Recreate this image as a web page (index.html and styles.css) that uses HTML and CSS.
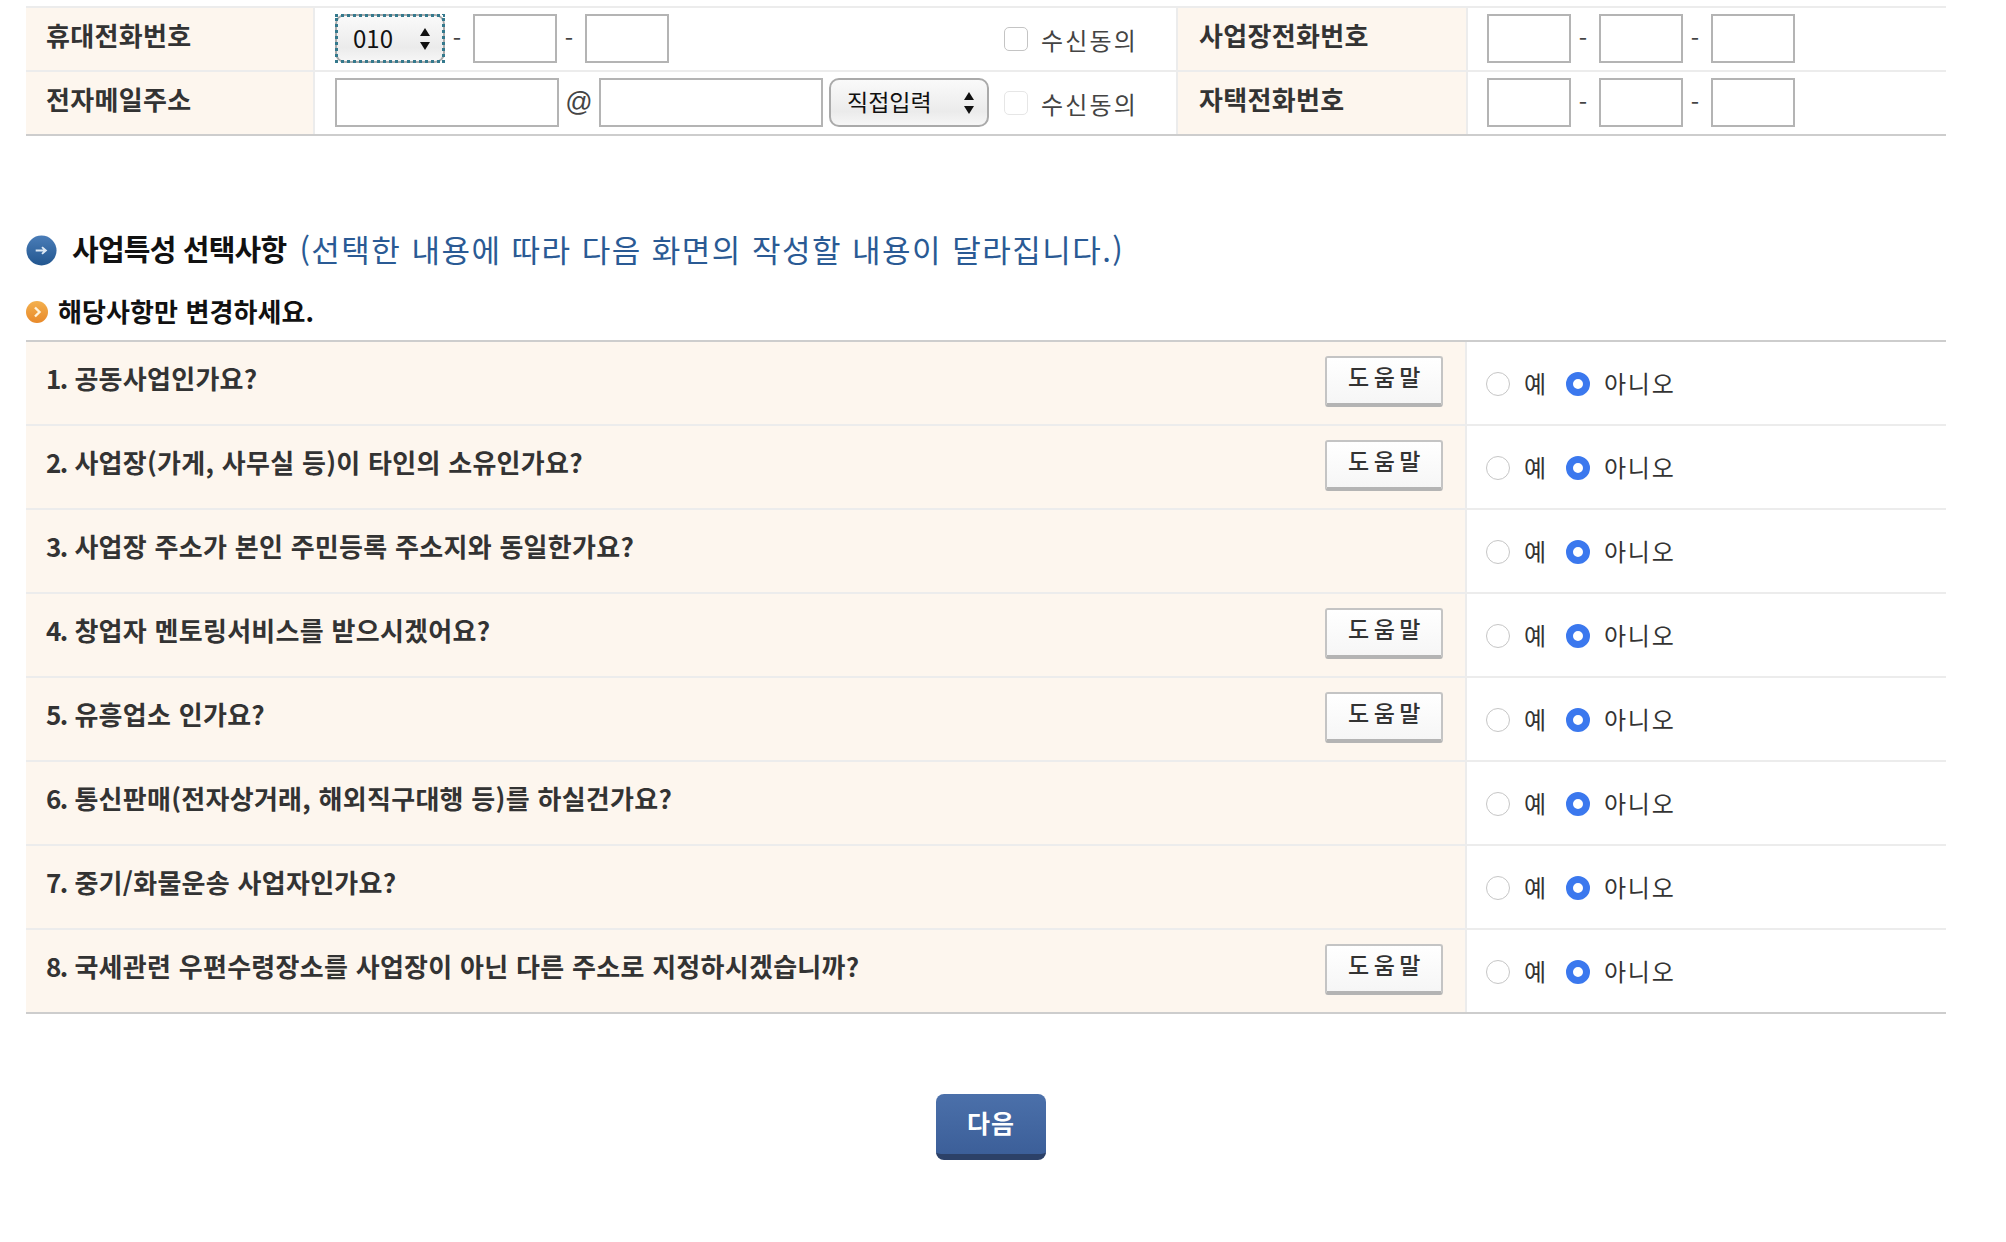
FILE: index.html
```html
<!DOCTYPE html>
<html lang="ko">
<head>
<meta charset="utf-8">
<title>사업특성 선택사항</title>
<link rel="stylesheet" href="styles.css">
</head>
<body>
<main class="page">
  <section class="contact">
    <div class="contact-row">
      <div class="label">휴대전화번호</div>
      <div class="cell">
        <div class="focus-wrap"><select class="sel sel-tel"><option>010</option></select></div>
        <span class="dash">-</span><input class="box" type="text"><span class="dash">-</span><input class="box" type="text">
        <label class="agree"><input class="check" type="checkbox"><span>수신동의</span></label>
      </div>
      <div class="label label-side">사업장전화번호</div>
      <div class="cell cell-side">
        <input class="box" type="text"><span class="dash">-</span><input class="box" type="text"><span class="dash">-</span><input class="box" type="text">
      </div>
    </div>
    <div class="contact-row">
      <div class="label">전자메일주소</div>
      <div class="cell">
        <input class="box box-mail" type="text"><span class="at">@</span><input class="box box-mail" type="text">
        <select class="sel sel-mail"><option>직접입력</option></select>
        <label class="agree"><input class="check check-off" type="checkbox" disabled><span>수신동의</span></label>
      </div>
      <div class="label label-side">자택전화번호</div>
      <div class="cell cell-side">
        <input class="box" type="text"><span class="dash">-</span><input class="box" type="text"><span class="dash">-</span><input class="box" type="text">
      </div>
    </div>
  </section>

  <h2 class="section-title">
    <svg class="icon-blue" viewBox="0 0 32 32" aria-hidden="true"><defs><linearGradient id="bl" x1="0" y1="0" x2="0" y2="1"><stop offset="0" stop-color="#4a7db8"/><stop offset="1" stop-color="#22568f"/></linearGradient></defs><circle cx="16" cy="16" r="15.5" fill="url(#bl)"/><path d="M10 16h10M16.5 12.5l4 3.5-4 3.5" fill="none" stroke="#dce8f4" stroke-width="2"/></svg>
    <strong>사업특성 선택사항</strong>
    <span class="subtitle">(선택한 내용에 따라 다음 화면의 작성할 내용이 달라집니다.)</span>
  </h2>
  <h3 class="sub-title">
    <svg class="icon-orange" viewBox="0 0 22 22" aria-hidden="true"><defs><linearGradient id="or" x1="0" y1="0" x2="0" y2="1"><stop offset="0" stop-color="#f3b04e"/><stop offset="1" stop-color="#e8892a"/></linearGradient></defs><circle cx="11" cy="11" r="11" fill="url(#or)"/><path d="M9 6.5l4.5 4.5-4.5 4.5" fill="none" stroke="#fff3dc" stroke-width="2.4"/></svg>
    해당사항만 변경하세요.
  </h3>

  <section class="questions">
    <div class="q-row"><div class="q-text"><span><span class="q-num">1.</span> 공동사업인가요?</span><button class="help" type="button">도움말</button></div><div class="q-answer"><span class="radio"></span><span class="opt">예</span><span class="radio radio-on"></span><span class="opt">아니오</span></div></div>
    <div class="q-row"><div class="q-text"><span><span class="q-num">2.</span> 사업장(가게, 사무실 등)이 타인의 소유인가요?</span><button class="help" type="button">도움말</button></div><div class="q-answer"><span class="radio"></span><span class="opt">예</span><span class="radio radio-on"></span><span class="opt">아니오</span></div></div>
    <div class="q-row"><div class="q-text"><span><span class="q-num">3.</span> 사업장 주소가 본인 주민등록 주소지와 동일한가요?</span></div><div class="q-answer"><span class="radio"></span><span class="opt">예</span><span class="radio radio-on"></span><span class="opt">아니오</span></div></div>
    <div class="q-row"><div class="q-text"><span><span class="q-num">4.</span> 창업자 멘토링서비스를 받으시겠어요?</span><button class="help" type="button">도움말</button></div><div class="q-answer"><span class="radio"></span><span class="opt">예</span><span class="radio radio-on"></span><span class="opt">아니오</span></div></div>
    <div class="q-row"><div class="q-text"><span><span class="q-num">5.</span> 유흥업소 인가요?</span><button class="help" type="button">도움말</button></div><div class="q-answer"><span class="radio"></span><span class="opt">예</span><span class="radio radio-on"></span><span class="opt">아니오</span></div></div>
    <div class="q-row"><div class="q-text"><span><span class="q-num">6.</span> 통신판매(전자상거래, 해외직구대행 등)를 하실건가요?</span></div><div class="q-answer"><span class="radio"></span><span class="opt">예</span><span class="radio radio-on"></span><span class="opt">아니오</span></div></div>
    <div class="q-row"><div class="q-text"><span><span class="q-num">7.</span> 중기/화물운송 사업자인가요?</span></div><div class="q-answer"><span class="radio"></span><span class="opt">예</span><span class="radio radio-on"></span><span class="opt">아니오</span></div></div>
    <div class="q-row"><div class="q-text"><span><span class="q-num">8.</span> 국세관련 우편수령장소를 사업장이 아닌 다른 주소로 지정하시겠습니까?</span><button class="help" type="button">도움말</button></div><div class="q-answer"><span class="radio"></span><span class="opt">예</span><span class="radio radio-on"></span><span class="opt">아니오</span></div></div>
  </section>

  <div class="actions"><button class="next" type="button">다음</button></div>
</main>
</body>
</html>
```
FILE: styles.css
```css
* { box-sizing: border-box; }
html, body { margin: 0; background: #fff; }
body {
  height: 1242px;
  overflow: hidden;
  font-family: "Noto Sans CJK KR", "Noto Sans", sans-serif;
  color: #333;
}
.page { width: 1920px; margin-left: 26px; padding-top: 6px; }

/* contact table */
.contact { border-top: 2px solid #ececec; border-bottom: 2px solid #cdcdcd; }
.contact-row { display: grid; grid-template-columns: 287px 865px 288px 480px; height: 64px; border-bottom: 2px solid #ececec; }
.contact-row:last-child { height: 62px; border-bottom: 0; }
.label {
  background: #fdf6ee;
  padding-left: 20px;
  font-size: 26px;
  font-weight: 700;
  line-height: 54px;
  letter-spacing: 0.35px;
  color: #333;
}
.label-side { padding-left: 21px; }
.cell {
  display: flex;
  align-items: flex-start;
  padding: 6px 0 0 20px;
  border-left: 2px solid #ececec;
  border-right: 2px solid #ececec;
}
.cell-side { padding-left: 19px; border-right: 0; }
.box {
  width: 84px;
  height: 49px;
  margin: 0;
  padding: 0;
  border: 2px solid #b4b4b4;
  background: #fff;
  border-radius: 0;
  outline: 0;
}
.box-mail { width: 224px; }
.dash { width: 28px; padding-right: 4px; text-align: center; font-size: 24px; line-height: 48px; color: #444; }
.at { width: 40px; text-align: center; font-family: "Liberation Sans", sans-serif; font-size: 27px; line-height: 49px; color: #444; }
.sel {
  appearance: none;
  margin: 0;
  height: 49px;
  font-family: "Noto Sans CJK KR", "Noto Sans", sans-serif;
  color: #111;
  border: 2px solid #aaa;
  border-radius: 10px;
  background-color: #f2f2f2;
  background-image:
    url("data:image/svg+xml,%3Csvg xmlns='http://www.w3.org/2000/svg' width='12' height='22'%3E%3Cpath d='M6 0l5 8H1zM6 22l-5-8h10z' fill='%23111'/%3E%3C/svg%3E"),
    linear-gradient(#fafafa, #ebebeb 70%, #f6f6f6);
  background-repeat: no-repeat;
  background-position: right 12px center, 0 0;
  outline: 0;
}
.focus-wrap { position: relative; width: 110px; height: 49px; }
.focus-wrap::after {
  content: "";
  position: absolute;
  inset: 0;
  pointer-events: none;
  background:
    repeating-linear-gradient(90deg, #34798d 0 3px, transparent 3px 6px) 0 0 / 100% 3px no-repeat,
    repeating-linear-gradient(90deg, #34798d 0 3px, transparent 3px 6px) 0 100% / 100% 3px no-repeat,
    repeating-linear-gradient(0deg, #34798d 0 3px, transparent 3px 6px) 0 0 / 3px 100% no-repeat,
    repeating-linear-gradient(0deg, #34798d 0 3px, transparent 3px 6px) 100% 0 / 3px 100% no-repeat;
}
.sel-tel { width: 110px; padding: 0 0 2px 16px; font-size: 24px; }
.sel-mail { width: 160px; margin-left: 6px; padding: 0 0 4px 16px; font-size: 23px; }
.agree { display: flex; align-items: flex-start; font-weight: 400; }
.cell > .agree { position: absolute; left: 1004px; }
.check {
  appearance: none;
  width: 24px;
  height: 24px;
  margin: 13px 13px 0 0;
  border: 1px solid #c4c4c4;
  border-radius: 5px;
  background: #fff;
}
.check-off { border-color: #e6e6e6; }
.agree span { font-size: 24px; line-height: 42px; margin-top: 5px; letter-spacing: 2.2px; color: #444; white-space: nowrap; }

/* headings */
.section-title {
  display: flex;
  align-items: center;
  margin: 96px 0 0;
  height: 32px;
  font-size: 29px;
  font-weight: 400;
  color: #111;
}
.section-title strong { margin-left: 15px; font-weight: 700; font-size: 29px; letter-spacing: -0.8px; color: #111; }
.icon-blue { width: 31px; height: 31px; flex: none; margin-top: 4px; }
.subtitle { margin-left: 13px; font-size: 31px; letter-spacing: 1.47px; color: #2a5a94; white-space: nowrap; }
.sub-title {
  display: flex;
  align-items: center;
  margin: 33px 0 0;
  height: 26px;
  font-size: 26px;
  font-weight: 700;
  letter-spacing: 0.1px;
  color: #111;
}
.icon-orange { width: 22px; height: 22px; flex: none; margin-right: 10px; margin-top: 4px; }

/* questions */
.questions { margin-top: 17px; border-top: 2px solid #cdcdcd; border-bottom: 2px solid #cdcdcd; }
.q-row { display: grid; grid-template-columns: 1439px 481px; height: 84px; border-bottom: 2px solid #ececec; }
.q-row:last-child { height: 82px; border-bottom: 0; }
.q-text {
  display: flex;
  justify-content: space-between;
  background: #fdf6ee;
  padding: 0 22px 0 20px;
  font-size: 26px;
  font-weight: 700;
  line-height: 72px;
  letter-spacing: 0.28px;
  color: #333;
}
.q-num { letter-spacing: -1.5px; }
.help {
  align-self: flex-start;
  margin-top: 14px;
  width: 118px;
  height: 51px;
  padding: 0 0 10px 5px;
  font-family: "Noto Sans CJK KR", sans-serif;
  font-size: 23px;
  font-weight: 500;
  letter-spacing: 4.5px;
  color: #333;
  border: 2px solid #c4c4c4;
  border-bottom: 4px solid #b4b4b4;
  border-radius: 3px;
  background: linear-gradient(#fff, #f6f6f6);
}
.q-answer { display: flex; align-items: center; padding-left: 19px; border-left: 2px solid #ececec; }
.radio {
  flex: none;
  width: 24px;
  height: 24px;
  margin-top: 2px;
  border: 1px solid #c6c6c6;
  border-radius: 50%;
  background: #fff;
}
.radio-on { border: 7px solid #3b78ee; }
.opt { margin: 0 18px 1px 14px; font-size: 24px; line-height: 1; letter-spacing: 1.8px; color: #333; white-space: nowrap; }

/* next */
.actions { display: flex; padding: 80px 0 0 910px; }
.next {
  width: 110px;
  height: 66px;
  padding: 0 0 4px;
  font-family: "Noto Sans CJK KR", sans-serif;
  font-size: 25px;
  font-weight: 700;
  letter-spacing: 1px;
  color: #fff;
  border: 0;
  border-bottom: 6px solid #2c4168;
  border-radius: 8px;
  background: linear-gradient(#4b70aa, #3c5f99);
}
```
